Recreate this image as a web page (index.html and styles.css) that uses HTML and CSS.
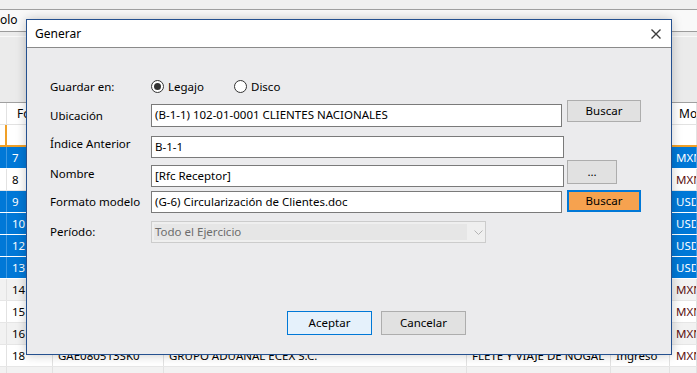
FILE: index.html
```html
<!DOCTYPE html>
<html lang="es">
<head>
	<meta charset="UTF-8">
	<title>Generar</title>
	<link rel="stylesheet" href="styles.css">
</head>
<body>
	<!-- ventana de fondo -->
	<div class="app">
		<div class="strip"></div>
		<div class="menubar"><span>olo</span></div>
		<div class="toolbar">
			<div class="tb-top"></div>
		</div>
		<div class="grid">
			<div class="hrow"><div class="c0"></div><div class="c1">Fo</div><div></div><div></div><div></div><div></div><div class="c6">Mo</div></div>
			<div class="hrow2"><div class="c0"></div><div></div><div></div><div></div><div></div><div></div><div></div></div>
			<div class="row sel"><div></div><div class="c1">7</div><div></div><div></div><div></div><div></div><div class="c6">MXN</div></div>
			<div class="row"><div></div><div class="c1">8</div><div></div><div></div><div></div><div></div><div class="c6">MXN</div></div>
			<div class="row sel"><div></div><div class="c1">9</div><div></div><div></div><div></div><div></div><div class="c6">USD</div></div>
			<div class="row sel"><div></div><div class="c1">10</div><div></div><div></div><div></div><div></div><div class="c6">USD</div></div>
			<div class="row sel"><div></div><div class="c1">12</div><div></div><div></div><div></div><div></div><div class="c6">USD</div></div>
			<div class="row sel"><div></div><div class="c1">13</div><div></div><div></div><div></div><div></div><div class="c6">USD</div></div>
			<div class="row alt"><div></div><div class="c1">14</div><div></div><div></div><div></div><div></div><div class="c6">MXN</div></div>
			<div class="row"><div></div><div class="c1">15</div><div></div><div></div><div></div><div></div><div class="c6">MXN</div></div>
			<div class="row alt"><div></div><div class="c1">16</div><div></div><div></div><div></div><div></div><div class="c6">MXN</div></div>
			<div class="row"><div></div><div class="c1">18</div><div>GAE080513SK0</div><div>GRUPO ADUANAL ECEX S.C.</div><div>FLETE Y VIAJE DE NOGAL</div><div>Ingreso</div><div class="c6">MXN</div></div>
			<div class="row alt"><div></div><div class="c1"></div><div></div><div></div><div></div><div></div><div class="c6"></div></div>
		</div>
	</div>

	<!-- dialogo Generar -->
	<div class="dialog">
		<div class="titlebar">
			<span>Generar</span>
			<svg class="close" width="10" height="10" viewBox="0 0 10 10"><path d="M0.5 0.5L9.5 9.5M9.5 0.5L0.5 9.5" stroke="#3c3c3c" stroke-width="1.4" fill="none"/></svg>
		</div>
		<div class="dbody">
			<div class="frow r1">
				<div class="lbl">Guardar en:</div>
				<div class="radios">
					<div class="opt"><span class="radio on"></span>Legajo</div>
					<div class="opt"><span class="radio"></span>Disco</div>
				</div>
			</div>
			<div class="frow r2">
				<div class="lbl">Ubicación</div>
				<div class="input w411">(B-1-1) 102-01-0001 CLIENTES NACIONALES</div>
				<div class="btn buscar">Buscar</div>
			</div>
			<div class="frow r3">
				<div class="lbl">Índice Anterior</div>
				<div class="input w413">B-1-1</div>
			</div>
			<div class="frow r4">
				<div class="lbl">Nombre</div>
				<div class="input w413">[Rfc Receptor]</div>
				<div class="btn dots">...</div>
			</div>
			<div class="frow r5">
				<div class="lbl">Formato modelo</div>
				<div class="input w411">(G-6) Circularización de Clientes.doc</div>
				<div class="btn buscar focus">Buscar</div>
			</div>
			<div class="frow r6">
				<div class="lbl">Período:</div>
				<div class="combo">
					<span class="combo-text">Todo el Ejercicio</span>
					<svg class="chev" width="9" height="5" viewBox="0 0 9 5"><path d="M0.5 0.5L4.5 4.5L8.5 0.5" stroke="#b4b4b4" fill="none"/></svg>
				</div>
			</div>
			<div class="actions">
				<div class="btn big primary">Aceptar</div>
				<div class="btn big">Cancelar</div>
			</div>
		</div>
	</div>
</body>
</html>
```

FILE: styles.css
```css
*{
	margin: 0;
	padding: 0;
	box-sizing: border-box;
}
body{
	width: 697px;
	height: 373px;
	overflow: hidden;
	position: relative;
	background: #f0f0f0;
	font-family: "Noto Sans", "Open Sans", sans-serif;
	font-size: 11.5px;
	color: #000;
}
/*ventana de fondo*/
.app{
	display: flex;
	flex-direction: column;
}
.strip{
	height: 10px;
	background: #f0f0f0;
	border-bottom: 1px solid #a0a0a0;
}
.menubar{
	height: 22px;
	background: #f9f9f9;
	border-bottom: 1px solid #9c9c9c;
	line-height: 20px;
	font-size: 12px;
}
.toolbar{
	height: 71px;
	background: #ebebeb;
	border-bottom: 1px solid #a0a0a0;
}
.tb-top{
	height: 5px;
	border-bottom: 1px solid #f8f8f8;
}
.grid{
	background: #fff;
}
.hrow,.hrow2,.row{
	display: grid;
	grid-template-columns: 7px 46px 111px 303px 144px 59px 1fr;
	height: 22px;
	line-height: 21px;
	white-space: nowrap;
	overflow: hidden;
}
.hrow > div,.hrow2 > div,.row > div{
	border-right: 1px solid #e2e2e2;
	padding-left: 5px;
	overflow: hidden;
}
.hrow{
	border-bottom: 1px solid #e2e2e2;
	font-size: 12px;
}
.hrow .c1{
	padding-left: 10px;
}
.hrow .c6{
	padding-left: 9px;
}
.hrow2{
	border-bottom: 2px solid #f0a028;
}
.hrow2 .c0{
	border-right: 2px solid #f0a028;
}
.row{
	border-bottom: 1px solid #e6e6e6;
}
.row .c6{
	color: #5a1010;
	padding-left: 6px;
}
.row.alt{
	background: #f2f2f2;
}
.row.sel{
	background: #0078d7;
	color: #fff;
	border-bottom-color: #fff;
}
.row.sel > div{
	border-right-color: #3d98e2;
}
.row.sel .c6{
	color: #fff;
}
/*dialogo*/
.dialog{
	position: absolute;
	left: 26px;
	top: 19px;
	width: 646px;
	height: 336px;
	border: 1px solid #24508f;
	background: #ebebed;
	box-shadow: 0 0 10px rgba(0,0,0,0.22);
	display: flex;
	flex-direction: column;
}
.titlebar{
	height: 28px;
	background: #fff;
	border-bottom: 1px solid #8a8a8a;
	display: flex;
	align-items: center;
	justify-content: space-between;
	padding: 0 10px 0 8px;
	font-size: 12px;
}
.close{
	display: block;
}
.dbody{
	padding-left: 23px;
}
.frow{
	display: flex;
	align-items: flex-start;
}
.lbl{
	width: 101px;
	line-height: 15px;
	flex-shrink: 0;
}
.r1{
	margin-top: 31px;
	height: 15px;
}
.r2{
	margin-top: 6px;
	height: 27px;
}
.r2 .lbl{
	margin-top: 8px;
}
.r2 .input{
	margin-top: 4px;
	height: 23px;
}
.r3{
	margin-top: 9px;
	height: 22px;
}
.r4{
	margin-top: 2px;
	height: 27px;
}
.r4 .lbl{
	margin-top: 6px;
}
.r4 .input{
	margin-top: 5px;
}
.r5{
	margin-top: 3px;
	height: 23px;
}
.r5 .lbl{
	margin-top: 4px;
}
.r5 .input{
	margin-top: 1px;
}
.r6{
	margin-top: 8px;
	height: 22px;
}
.r6 .lbl{
	margin-top: 3px;
}
/*radios*/
.radios{
	display: flex;
}
.opt{
	display: flex;
	align-items: center;
	width: 83px;
	line-height: 15px;
}
.radio{
	width: 13px;
	height: 13px;
	border: 1px solid #333;
	border-radius: 50%;
	margin-right: 4px;
	display: flex;
	align-items: center;
	justify-content: center;
	background: #fff;
}
.radio.on::after{
	content: "";
	width: 7px;
	height: 7px;
	border-radius: 50%;
	background: #333;
}
/*cajas de texto*/
.input{
	height: 22px;
	background: #fff;
	border: 1px solid #7a7a7a;
	padding-left: 3px;
	line-height: 20px;
	white-space: nowrap;
	overflow: hidden;
}
.w411{
	width: 411px;
	margin-right: 5px;
}
.w413{
	width: 413px;
	margin-right: 3px;
}
.combo{
	width: 335px;
	height: 22px;
	border: 1px solid #cccccc;
	background: #efefef;
	padding: 2px;
	display: flex;
	align-items: center;
}
.combo-text{
	width: 313px;
	height: 16px;
	background: #e6e6e6;
	color: #6d6d6d;
	line-height: 16px;
	padding-left: 1px;
}
.chev{
	margin-left: 7px;
}
/*botones*/
.btn{
	background: #e1e1e1;
	border: 1px solid #adadad;
	display: flex;
	align-items: center;
	justify-content: center;
	padding-bottom: 2px;
}
.buscar{
	width: 74px;
	height: 22px;
}
.dots{
	width: 50px;
	height: 24px;
}
.buscar.focus{
	background: #f6a24f;
	border: 2px solid #0078d7;
}
.actions{
	display: flex;
	gap: 9px;
	margin-top: 68px;
	padding-left: 237px;
}
.big{
	width: 85px;
	height: 24px;
	padding-bottom: 1px;
}
.big.primary{
	background: #e5f1fb;
	border-color: #0078d7;
}
```
